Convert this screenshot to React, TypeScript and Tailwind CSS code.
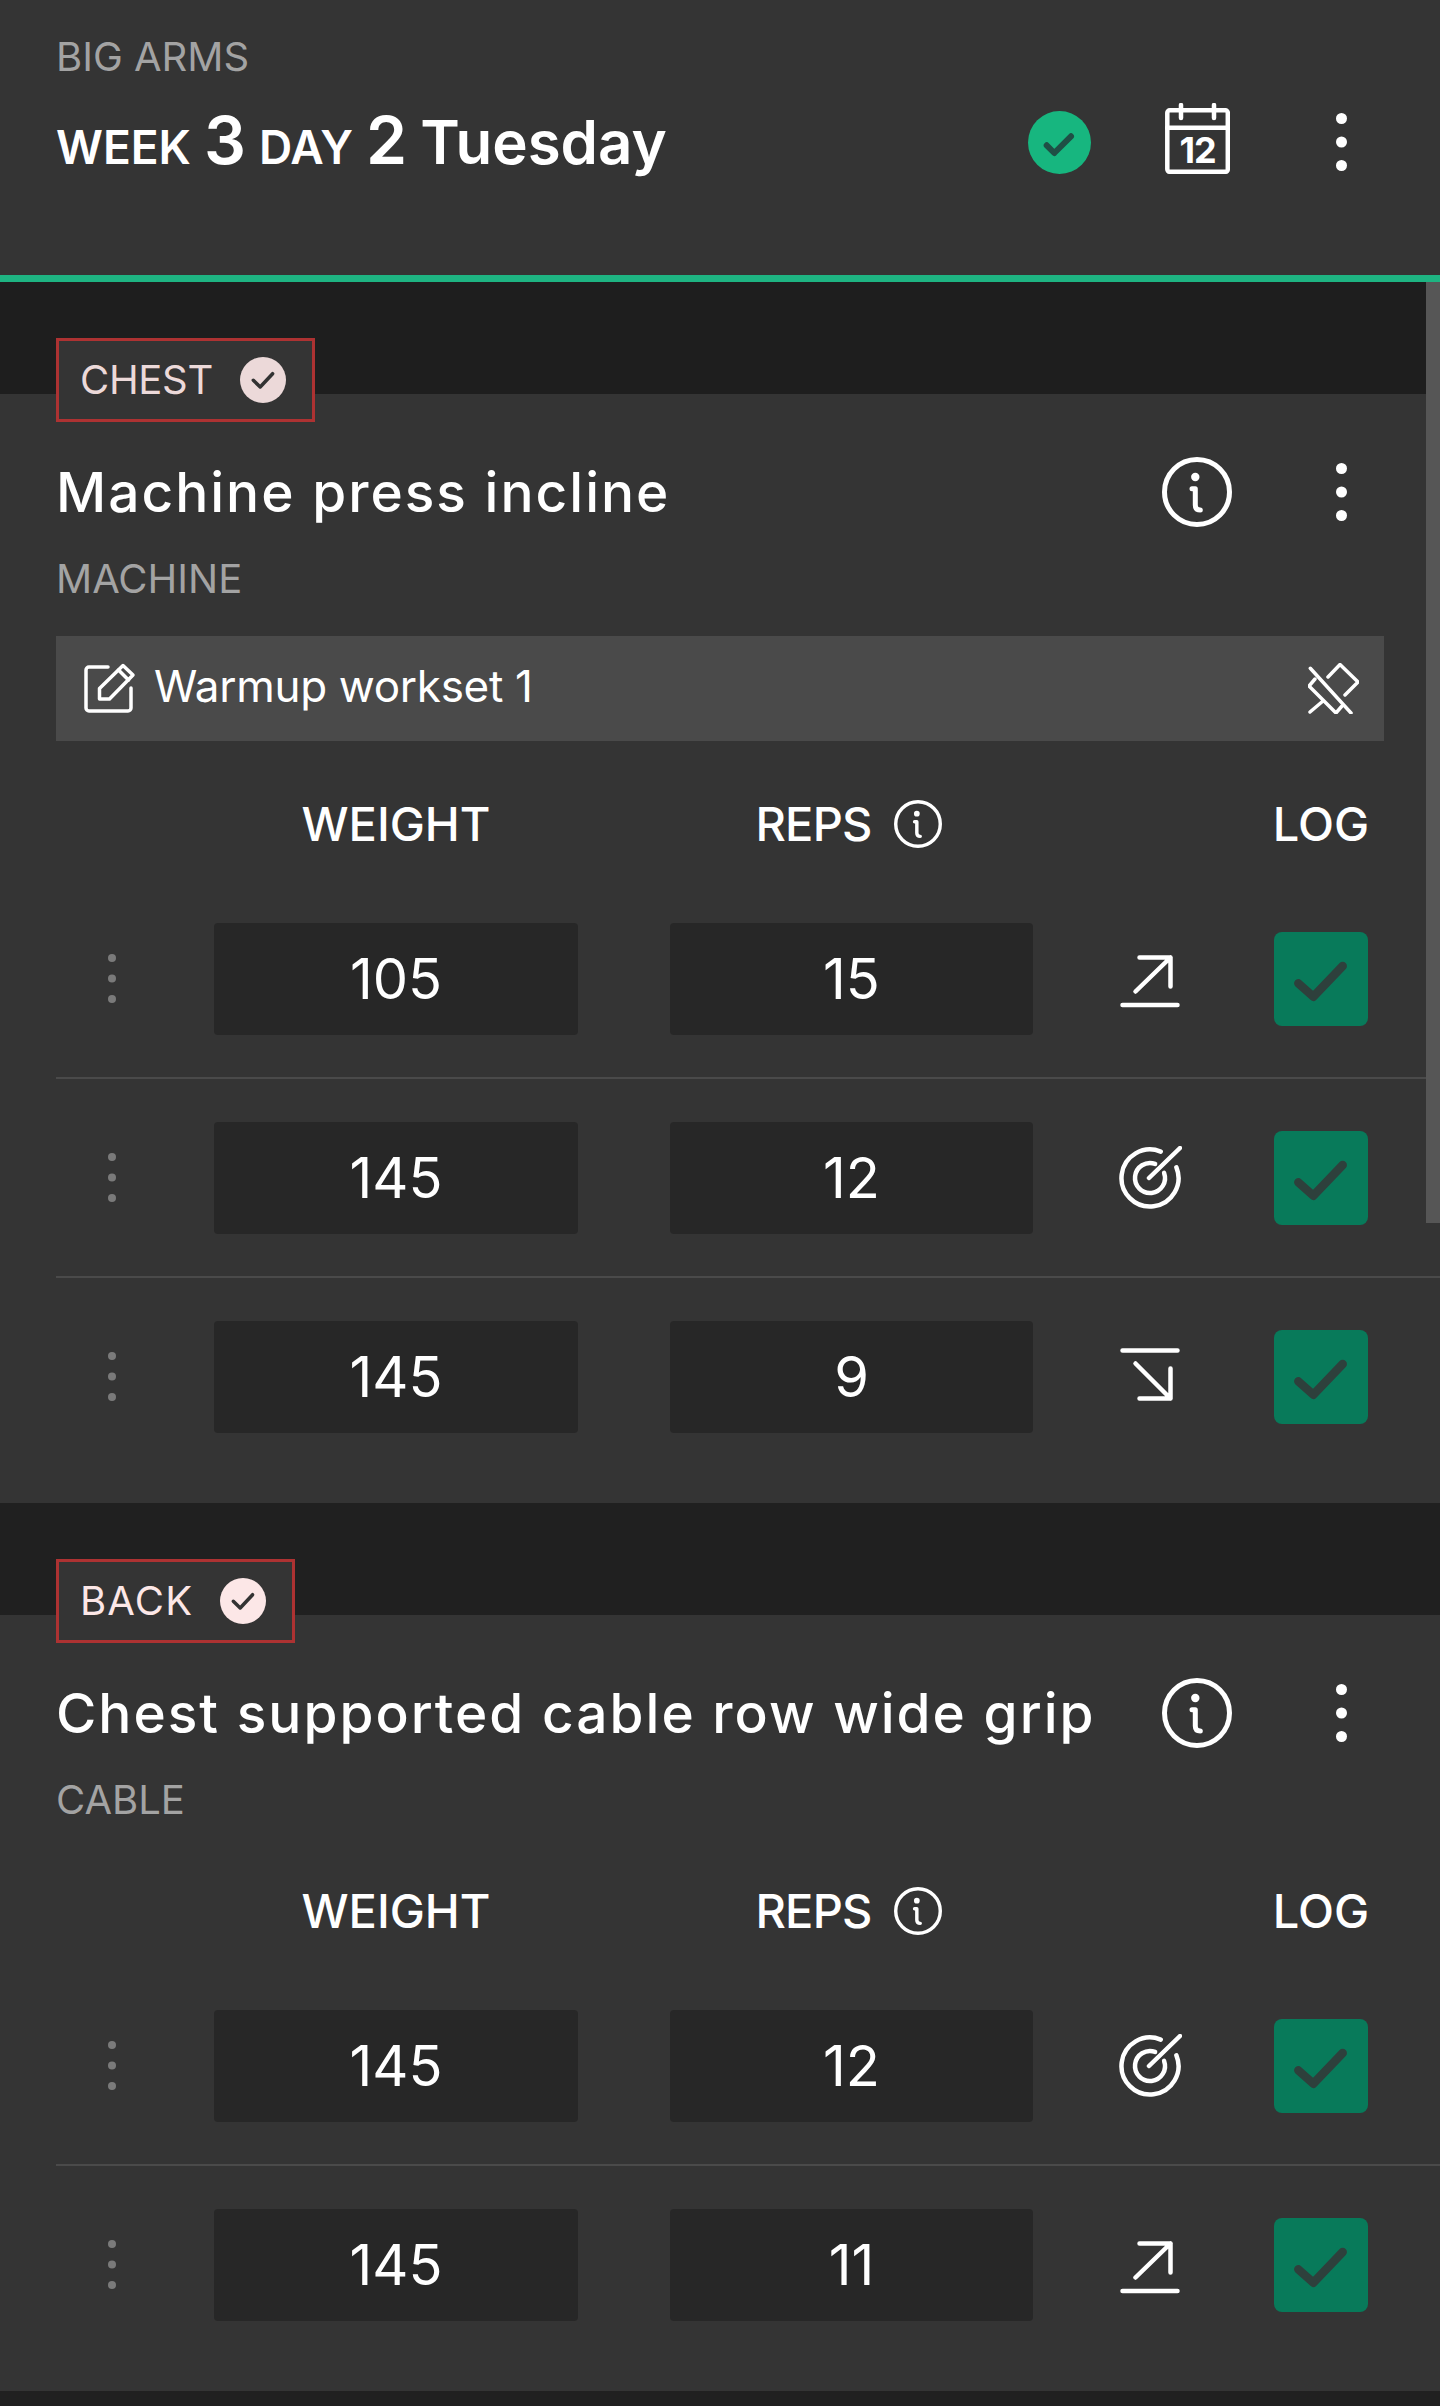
import React from 'react';

const font = "font-['Inter','Liberation_Sans',sans-serif]";

type SetRow = { weight: number; reps: number; trend: 'up' | 'down' | 'target' };

const InfoIcon = ({ size }: { size: number }) => (
  <svg width={size} height={size} viewBox="0 0 70 70" fill="none" stroke="#fff" strokeWidth="5" strokeLinecap="round" strokeLinejoin="round">
    <circle cx="35" cy="35" r="32.500" />
    <path d="M30 31.700h3.300V48q0 5 5 5" />
    <circle cx="33.300" cy="20" r="4.200" fill="#fff" stroke="none" />
  </svg>
);

const Dots = ({ color, r, gap }: { color: string; r: number; gap: number }) => (
  <svg width={r * 2} height={gap * 2 + r * 2} viewBox={`0 0 ${r * 2} ${gap * 2 + r * 2}`}>
    <circle cx={r} cy={r} r={r} fill={color} />
    <circle cx={r} cy={r + gap} r={r} fill={color} />
    <circle cx={r} cy={r + gap * 2} r={r} fill={color} />
  </svg>
);

const TrendIcon = ({ trend }: { trend: SetRow['trend'] }) => (
  <svg width="64" height="64" viewBox="0 0 64 64" fill="none" stroke="#fff" strokeWidth="4.500" strokeLinecap="round" strokeLinejoin="round">
    {trend === 'up' && <path d="M4.500 58h55M17.500 44.500l35-34M21.500 10.500h31v29" />}
    {trend === 'down' && <path d="M4.500 5.500h55M17.500 18.500l35 35M21.500 53.500h31v-30" />}
    {trend === 'target' && (
      <>
        <path d="M58.400 21.300A28.500 28.500 0 1 1 42.700 5.600" />
        <path d="M46.100 26.900A15 15 0 1 1 37.100 17.900" />
        <path d="M31 32L62 2" />
      </>
    )}
  </svg>
);

const LogBox = () => (
  <div className="w-[94px] h-[94px] rounded-lg bg-[#087a5a]">
    <svg width="94" height="94" viewBox="0 0 94 94" fill="none" stroke="#2e403c" strokeWidth="8.500" strokeLinecap="round" strokeLinejoin="round">
      <path d="M24.300 51.300L39.300 64.700L68.700 34" />
    </svg>
  </div>
);

const ColumnHeader = () => (
  <div className="flex items-center h-[90px] pl-[214px] text-[47px] font-medium text-white">
    <div className="w-[364px] text-center">WEIGHT</div>
    <div className="ml-[92px] w-[363px] pr-[6px] flex items-center justify-center gap-[22px]">
      <span className="tracking-[-0.8px]">REPS</span>
      <InfoIcon size={48} />
    </div>
    <div className="ml-[241px] w-[94px] flex justify-center">LOG</div>
  </div>
);

const SetLine = ({ row, last }: { row: SetRow; last: boolean }) => (
  <div className={`flex items-center h-[197px] box-content ml-[56px] ${last ? '' : 'border-b-2 border-[#4a4a4a]'}`}>
    <div className="w-[112px] flex justify-center">
      <Dots color="#7a7a7a" r={4} gap={20.500} />
    </div>
    <div className="ml-[46px] w-[364px] h-[112px] rounded-sm bg-[#272727] flex items-center justify-center text-[56px] text-white">{row.weight}</div>
    <div className="ml-[92px] w-[363px] h-[112px] rounded-sm bg-[#272727] flex items-center justify-center text-[56px] text-white">{row.reps}</div>
    <div className="w-[233px] flex justify-center">
      <TrendIcon trend={row.trend} />
    </div>
    <div className="ml-[8px]">
      <LogBox />
    </div>
  </div>
);

const Tag = ({ name, tint, tracking }: { name: string; tint: string; tracking: string }) => (
  <div className="relative z-10 ml-[56px] -mb-[28px] w-fit h-[84px] pl-[21px] pr-[26px] flex items-center gap-[27px] border-[3px] border-[#ad3232] bg-[#343434]">
    <span className={`text-[40px] ${tracking}`} style={{ color: tint }}>{name}</span>
    <svg width="46" height="46" viewBox="0 0 46 46" fill="none">
      <circle cx="23" cy="23" r="23" fill={tint} />
      <path d="M13.300 23.300L20.200 30L32.600 16.700" stroke="#333" strokeWidth="3.500" strokeLinecap="round" strokeLinejoin="round" />
    </svg>
  </div>
);

const NoteBar = () => (
  <div className="mt-[40px] mx-[56px] h-[105px] bg-[#4a4a4a] flex items-center pl-[14px] pr-[25px]">
    <svg width="80" height="75" viewBox="0 0 80 75" fill="none" stroke="#fff" strokeWidth="3.500" strokeLinecap="round" strokeLinejoin="round">
      <path d="M38 16H19a3 3 0 0 0-3 3v38a3 3 0 0 0 3 3h39a3 3 0 0 0 3-3V37" />
      <path d="M29.500 48V37.500L53 14.500L63 24L39.500 48z" />
      <path d="M48.500 19L58.500 29" />
    </svg>
    <span className="ml-[4px] flex-1 pb-[6px] text-[44px] font-normal tracking-[-0.3px] text-white">Warmup workset 1</span>
    <svg width="51" height="51" viewBox="0 0 51 51" fill="none" stroke="#fff" strokeWidth="3.500" strokeLinecap="round" strokeLinejoin="round">
      <path d="M2.300 5.300L43 50" />
      <path d="M20 14L32 1.500L50 19L37 32" />
      <path d="M7 16L1 23L28 50L34 43" />
      <path d="M15 38L2 49" />
    </svg>
  </div>
);

const Exercise = ({ tag, tint, tracking, title, kind, note, rows, shade }: { tag: string; tint: string; tracking: string; title: string; kind: string; note?: boolean; rows: SetRow[]; shade: string }) => (
  <div className={`pt-[56px] ${shade}`}>
    <Tag name={tag} tint={tint} tracking={tracking} />
    <div className="bg-[#343434] pt-[28px] pb-[28px]">
      <div className="flex items-center h-[140px] pl-[56px]">
        <div className="flex-1 text-[55px] font-medium tracking-[2px] text-white whitespace-nowrap">{title}</div>
        <InfoIcon size={70} />
        <div className="w-[72px] ml-[73px] flex justify-center mr-[63px]">
          <Dots color="#fff" r={5.500} gap={23.500} />
        </div>
      </div>
      <div className="h-[34px] pl-[56px] flex items-center text-[40px] text-[#a3a3a3]">{kind}</div>
      {note && <NoteBar />}
      <div className={note ? 'mt-[38px] mb-[11px]' : 'mt-[49px] mb-[11px]'}>
        <ColumnHeader />
      </div>
      {rows.map((row, i) => (
        <SetLine key={i} row={row} last={i === rows.length - 1} />
      ))}
    </div>
  </div>
);

export default function App() {
  return (
    <div className={`relative h-[2406px] w-[1440px] overflow-hidden bg-[#202020] ${font}`}>
      {/* Header */}
      <div className="h-[282px] bg-[#343434] border-b-[7px] border-[#1eb482] flex items-start pl-[56px]">
        <div className="flex-1 pt-[32px]">
          <div className="text-[40px] leading-[50px] text-[#a3a3a3]">BIG ARMS</div>
          <div className="mt-[9px] h-[80px] flex items-baseline gap-[13px] font-semibold text-white whitespace-nowrap">
            <span className="text-[46px]">WEEK</span>
            <span className="text-[66px]">3</span>
            <span className="text-[46px]">DAY</span>
            <span className="text-[66px]">2</span>
            <span className="text-[60px]">Tuesday</span>
          </div>
        </div>
        <svg className="mt-[111px]" width="63" height="63" viewBox="0 0 63 63" fill="none">
          <circle cx="31.500" cy="31.500" r="31.500" fill="#17b67f" />
          <path d="M18.700 34.300L26.300 42L43 25.300" stroke="#1f4f45" strokeWidth="6" strokeLinecap="round" strokeLinejoin="round" />
        </svg>
        <svg className="mt-[103px] ml-[74px]" width="65" height="71" viewBox="0 0 65 71" fill="none" stroke="#fff" strokeWidth="4.500" strokeLinecap="round" strokeLinejoin="round">
          <rect x="2.300" y="7.300" width="60.500" height="61.500" rx="2.500" />
          <path d="M2 24.700h61" />
          <path d="M16 2v13M49 2v13" />
          <text x="32.500" y="60" textAnchor="middle" fill="#fff" stroke="none" fontSize="36" fontWeight="700" letterSpacing="-1" fontFamily="Inter, sans-serif">12</text>
        </svg>
        <div className="mt-[113px] ml-[106px] mr-[93px]">
          <Dots color="#fff" r={5.500} gap={23.500} />
        </div>
      </div>

      <Exercise
        tag="CHEST"
        tint="#ecd9d9"
        tracking="tracking-[-0.3px]"
        shade="bg-[#1e1e1e]"
        title="Machine press incline"
        kind="MACHINE"
        note
        rows={[
          { weight: 105, reps: 15, trend: 'up' },
          { weight: 145, reps: 12, trend: 'target' },
          { weight: 145, reps: 9, trend: 'down' },
        ]}
      />
      <Exercise
        tag="BACK"
        tint="#fce7e7"
        tracking="tracking-[1.200px]"
        shade="bg-[#202020]"
        title="Chest supported cable row wide grip"
        kind="CABLE"
        rows={[
          { weight: 145, reps: 12, trend: 'target' },
          { weight: 145, reps: 11, trend: 'up' },
        ]}
      />

      {/* scrollbar thumb */}
      <div className="absolute right-0 top-[282px] w-[14px] h-[941px] bg-[#565656]" />
    </div>
  );
}
